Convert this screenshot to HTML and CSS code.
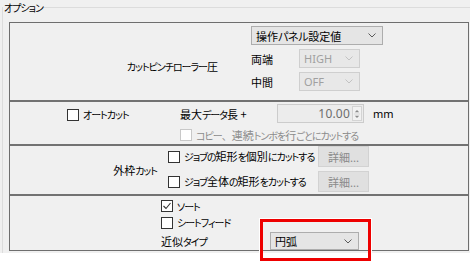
FILE: index.html
```html
<!DOCTYPE html>
<html lang="ja">
<head>
<meta charset="utf-8">
<title>オプション</title>
<link rel="stylesheet" href="styles.css">
</head>
<body>
<div class="window">
  <fieldset class="group">
    <legend class="legend"><span class="k">オプション</span></legend>
    <div class="table">
      <div class="row row1">
        <div class="label label1"><span class="k">カットピンチローラー</span>圧</div>
        <div class="stack">
          <div class="combo wide"><span>操作<span class="k2">パネル</span>設定値</span><svg class="chev" width="8" height="5" viewBox="0 0 8 5"><path d="M0.5 0.5 L4 4 L7.5 0.5" /></svg></div>
          <div class="pair"><span class="plabel">両端</span><div class="combo small disabled"><span>HIGH</span><svg class="chev" width="8" height="5" viewBox="0 0 8 5"><path d="M0.5 0.5 L4 4 L7.5 0.5" /></svg></div></div>
          <div class="pair"><span class="plabel">中間</span><div class="combo small disabled"><span>OFF</span><svg class="chev" width="8" height="5" viewBox="0 0 8 5"><path d="M0.5 0.5 L4 4 L7.5 0.5" /></svg></div></div>
        </div>
      </div>
      <div class="row row2">
        <div class="autocut"><span class="cb"></span><span class="cbtext"><span class="k">オートカット</span></span></div>
        <div class="maxcol">
          <div class="maxline">
            <span class="maxlabel">最大<span class="k">データ</span>長 +</span>
            <div class="spin"><span class="spinval">10.00</span><span class="spinbtns"><svg width="9" height="14" viewBox="0 0 9 14"><path class="tri" d="M2 5 L4.5 2.5 L7 5 Z M2 9 L4.5 11.5 L7 9 Z"/><path class="sep" d="M1 7 H8"/></svg></span></div>
            <span class="unit">mm</span>
          </div>
          <div class="copyline"><span class="cb disabled"></span><span class="cbtext dim"><span class="k">コピー</span><span class="comma">、</span>連続<span class="k">トンボを</span>行<span class="k">ごとにカットする</span></span></div>
        </div>
      </div>
      <div class="row row3">
        <div class="label label3">外枠<span class="k">カット</span></div>
        <div class="opts">
          <div class="optline"><div class="optcheck"><span class="cb"></span><span class="cbtext"><span class="k">ジョブの</span>矩形<span class="k">を</span>個別<span class="k">にカットする</span></span></div><div class="btn">詳細...</div></div>
          <div class="optline"><div class="optcheck"><span class="cb"></span><span class="cbtext"><span class="k">ジョブ</span>全体<span class="k">の</span>矩形<span class="k">をカットする</span></span></div><div class="btn">詳細...</div></div>
        </div>
      </div>
      <div class="row row4">
        <div class="line4"><span class="cb"><svg width="12" height="12" viewBox="0 0 12 12"><path class="check" d="M2.5 6 L5 8.5 L9.5 3" /></svg></span><span class="cbtext"><span class="k">ソート</span></span></div>
        <div class="line4"><span class="cb"></span><span class="cbtext"><span class="k">シートフィード</span></span></div>
        <div class="approx"><span class="alabel">近似<span class="k">タイプ</span></span><div class="combo arc"><span>円弧</span><svg class="chev" width="8" height="5" viewBox="0 0 8 5"><path d="M0.5 0.5 L4 4 L7.5 0.5" /></svg></div></div>
      </div>
    </div>
  </fieldset>
  <div class="highlight"></div>
</div>
</body>
</html>
```

FILE: styles.css
```css
* { box-sizing: border-box; }
html, body { margin: 0; padding: 0; }
body {
  background: #ffffff;
  font-family: "Noto Sans CJK JP", "Noto Sans", sans-serif;
  font-size: 11px;
  line-height: 14px;
  color: #000;
  font-feature-settings: "palt";
  width: 470px;
  height: 264px;
  overflow: hidden;
}
.k { font-size: 10px; letter-spacing: -1px; }
.k2 { letter-spacing: -0.3px; }
.comma { font-size: 10px; font-feature-settings: normal; }
.window {
  position: relative;
  width: 470px;
  height: 253px;
  background: #f0f0f0;
}
.group {
  margin: 0 0 0 2px;
  padding: 7px 0 2px 6px;
  border: 1px solid #dcdcdc;
  border-right: none;
  border-bottom: none;
  min-width: 0;
  height: 253px;
}
.legend {
  padding: 0 1px;
  margin-left: -6px;
  line-height: 14px;
}
.table {
  width: 460px;
  border: 1px solid #6e6e6e;
  display: flex;
  flex-direction: column;
}
.row { display: flex; border-top: 2px solid #727272; }
.row1 { border-top: none; height: 77px; align-items: flex-start; }
.row2 { height: 44px; padding: 2px 0 0 57px; align-items: flex-start; }
.row3 { height: 50px; align-items: center; }
.row4 { height: 56px; flex-direction: column; padding: 2px 0 0 151px; }

.label { text-align: right; white-space: nowrap; }
.label1 { width: 208px; margin-top: 36px; }
.stack { margin-left: 33px; padding-top: 3px; display: flex; flex-direction: column; gap: 4px; }
.pair { display: flex; align-items: center; }
.plabel { width: 48px; }

.combo {
  display: flex;
  align-items: center;
  justify-content: space-between;
  height: 19px;
  padding: 0 6px 0 4px;
  background: #e5e5e5;
  border: 1px solid #adadad;
  white-space: nowrap;
}
.combo .chev path { fill: none; stroke: #5a5a5a; stroke-width: 1; }
.combo.wide { width: 132px; }
.combo.small { width: 61px; }
.combo.disabled { background: #e8e8e8; border-color: #cfcfcf; color: #a0a0a0; font-family: "Noto Sans", sans-serif; }
.combo.disabled .chev path { stroke: #c2c2c2; }
.combo.arc { width: 89px; height: 18px; }

.cb {
  display: inline-block;
  width: 12px;
  height: 12px;
  background: #fff;
  border: 1px solid #333;
  flex: none;
  position: relative;
}
.cb svg { position: absolute; left: -1px; top: -1px; }
.cb .check { fill: none; stroke: #333; stroke-width: 1.1; }
.cb.disabled { border-color: #c8c8c8; }
.cbtext { margin-left: 4px; white-space: nowrap; }
.dim { color: #8c8c8c; }

.autocut { width: 113px; height: 19px; display: flex; align-items: center; padding-top: 2px; }
.maxcol { display: flex; flex-direction: column; }
.maxline { display: flex; align-items: center; height: 19px; }
.maxlabel { width: 97px; white-space: nowrap; padding-top: 2px; }
.spin {
  width: 87px;
  height: 19px;
  border: 1px solid #cccccc;
  background: #ececec;
  display: flex;
  align-items: center;
  justify-content: flex-end;
  padding-right: 1px;
}
.spinval { color: #6d6d6d; font-family: "Noto Sans", sans-serif; font-size: 12px; margin-right: 2px; letter-spacing: 0.2px; }
.spinbtns { width: 10px; height: 15px; display: flex; align-items: center; justify-content: center; border: 1px solid #d4d4d4; background: #f2f2f2; }
.spinbtns .tri { fill: #8a8a8a; }
.spinbtns .sep { stroke: #d4d4d4; stroke-width: 1; }
.unit { margin-left: 9px; font-family: "Noto Sans", sans-serif; }
.copyline { display: flex; align-items: center; margin-top: 5px; height: 14px; }

.label3 { width: 147px; }
.opts { margin-left: 11px; display: flex; flex-direction: column; gap: 4px; padding-bottom: 2px; }
.optline { display: flex; align-items: center; height: 21px; }
.optcheck { width: 150px; display: flex; align-items: center; }
.btn {
  width: 51px;
  height: 21px;
  background: #e0e0e0;
  border: 1px solid #d2d2d2;
  color: #8a8a8a;
  display: flex;
  align-items: center;
  justify-content: center;
}

.line4 { display: flex; align-items: center; height: 17px; }
.approx { display: flex; align-items: center; margin-top: 1px; }
.alabel { width: 109px; white-space: nowrap; }

.highlight {
  position: absolute;
  left: 260px;
  top: 219px;
  width: 111px;
  height: 42px;
  border: 3px solid #ee0000;
  outline: 1px solid #ffffff;
}
```
